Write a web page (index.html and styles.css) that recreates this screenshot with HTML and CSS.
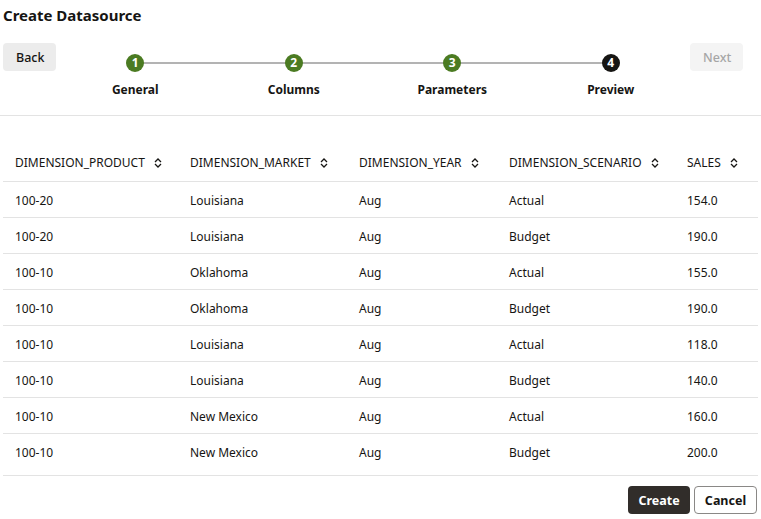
FILE: index.html
```html
<!DOCTYPE html>
<html>
<head>
<meta charset="utf-8">
<link rel="stylesheet" href="styles.css">
</head>
<body>
<div class="page">
  <h1 class="title">Create Datasource</h1>
  <div class="wizard">
    <button class="btn btn-back">Back</button>
    <ol class="stepper">
      <li class="step done"><span class="dot">1</span><span class="label">General</span></li>
      <li class="step done"><span class="dot">2</span><span class="label">Columns</span></li>
      <li class="step done"><span class="dot">3</span><span class="label">Parameters</span></li>
      <li class="step current"><span class="dot">4</span><span class="label">Preview</span></li>
    </ol>
    <button class="btn btn-next" disabled>Next</button>
  </div>
  <div class="table-wrap">
    <table class="grid">
      <colgroup>
        <col class="c1"><col class="c2"><col class="c3"><col class="c4"><col class="c5">
      </colgroup>
      <thead>
        <tr>
          <th><span class="th-in">DIMENSION_PRODUCT<svg class="sort" viewBox="0 0 8 10"><path d="M1 4 L4 1 L7 4 M1 6 L4 9 L7 6"/></svg></span></th>
          <th><span class="th-in">DIMENSION_MARKET<svg class="sort" viewBox="0 0 8 10"><path d="M1 4 L4 1 L7 4 M1 6 L4 9 L7 6"/></svg></span></th>
          <th><span class="th-in">DIMENSION_YEAR<svg class="sort" viewBox="0 0 8 10"><path d="M1 4 L4 1 L7 4 M1 6 L4 9 L7 6"/></svg></span></th>
          <th><span class="th-in">DIMENSION_SCENARIO<svg class="sort" viewBox="0 0 8 10"><path d="M1 4 L4 1 L7 4 M1 6 L4 9 L7 6"/></svg></span></th>
          <th><span class="th-in">SALES<svg class="sort" viewBox="0 0 8 10"><path d="M1 4 L4 1 L7 4 M1 6 L4 9 L7 6"/></svg></span></th>
        </tr>
      </thead>
      <tbody>
        <tr><td>100-20</td><td>Louisiana</td><td>Aug</td><td>Actual</td><td>154.0</td></tr>
        <tr><td>100-20</td><td>Louisiana</td><td>Aug</td><td>Budget</td><td>190.0</td></tr>
        <tr><td>100-10</td><td>Oklahoma</td><td>Aug</td><td>Actual</td><td>155.0</td></tr>
        <tr><td>100-10</td><td>Oklahoma</td><td>Aug</td><td>Budget</td><td>190.0</td></tr>
        <tr><td>100-10</td><td>Louisiana</td><td>Aug</td><td>Actual</td><td>118.0</td></tr>
        <tr><td>100-10</td><td>Louisiana</td><td>Aug</td><td>Budget</td><td>140.0</td></tr>
        <tr><td>100-10</td><td>New Mexico</td><td>Aug</td><td>Actual</td><td>160.0</td></tr>
        <tr><td>100-10</td><td>New Mexico</td><td>Aug</td><td>Budget</td><td>200.0</td></tr>
      </tbody>
    </table>
  </div>
  <div class="footer">
    <button class="btn btn-create">Create</button>
    <button class="btn btn-cancel">Cancel</button>
  </div>
</div>
</body>
</html>
```

FILE: styles.css
```css
* { box-sizing: border-box; }
html, body { margin: 0; padding: 0; background: #fff; }
body {
  font-family: "Noto Sans", "Open Sans", sans-serif;
  color: #161513;
  width: 761px;
  height: 519px;
  overflow: hidden;
}
.page { display: flex; flex-direction: column; }
.title {
  margin: 0;
  padding: 5px 3px 0;
  height: 43px;
  font-size: 15px;
  font-weight: 700;
  line-height: 20px;
}
.wizard {
  display: flex;
  align-items: flex-start;
  padding: 0 18px 0 3px;
  height: 73px;
  border-bottom: 1px solid #e3e3e3;
}
.btn {
  font-family: inherit;
  font-size: 12.5px;
  font-weight: 500;
  height: 28px;
  border-radius: 4px;
  border: 1px solid transparent;
  padding: 0 12px;
  cursor: pointer;
}
.btn-back { width: 53px; background: #ececec; color: #161513; }
.btn-next { width: 53px; background: #f4f4f4; color: #a6a6a6; }
.stepper {
  list-style: none;
  margin: 0;
  padding: 0;
  flex: 1;
  display: flex;
}
.step {
  flex: 1;
  display: flex;
  flex-direction: column;
  align-items: center;
  position: relative;
  padding-top: 11px;
}
.step::before {
  content: "";
  position: absolute;
  top: 19px;
  height: 2px;
  background: #b3b3b3;
  left: 0;
  right: 0;
}
.step:first-child::before { left: 50%; }
.step:last-child::before { right: 50%; }
.dot {
  position: relative;
  width: 18px;
  height: 18px;
  border-radius: 50%;
  background: #4b7b22;
  color: #fff;
  font-size: 12px;
  font-weight: 700;
  line-height: 18px;
  text-align: center;
}
.step.current .dot { background: #161513; }
.label {
  margin-top: 10px;
  font-size: 12px;
  font-weight: 700;
  line-height: 16px;
}
.table-wrap {
  margin: 0 3px;
  padding-top: 27px;
  padding-bottom: 6px;
  border-bottom: 1px solid #e3e3e3;
}
.grid {
  width: 755px;
  border-collapse: collapse;
  table-layout: fixed;
  font-size: 12px;
  font-weight: 400;
}
.c1 { width: 175px; }
.c2 { width: 169px; }
.c3 { width: 150px; }
.c4 { width: 178px; }
.c5 { width: 83px; }
.grid th {
  text-align: left;
  font-weight: 400;
  height: 38px;
  padding: 2px 12px 0;
  border-bottom: 1px solid #e3e3e3;
}
.th-in { display: inline-flex; align-items: center; gap: 9px; }
.sort { width: 8px; height: 10px; fill: none; stroke: #161513; stroke-width: 1.3; }
.grid td {
  height: 36px;
  padding: 3px 12px 0;
  border-bottom: 1px solid #e3e3e3;
}
.grid tbody tr:last-child td { border-bottom: none; }
.footer {
  display: flex;
  justify-content: flex-end;
  gap: 4px;
  padding: 10px 4px 0 0;
}
.btn-create {
  width: 62px;
  background: #312d2a;
  color: #fff;
  font-weight: 700;
  padding: 0;
}
.btn-cancel {
  width: 63px;
  background: #fff;
  border-color: #8a8886;
  color: #161513;
  font-weight: 700;
  padding: 0;
}
```
